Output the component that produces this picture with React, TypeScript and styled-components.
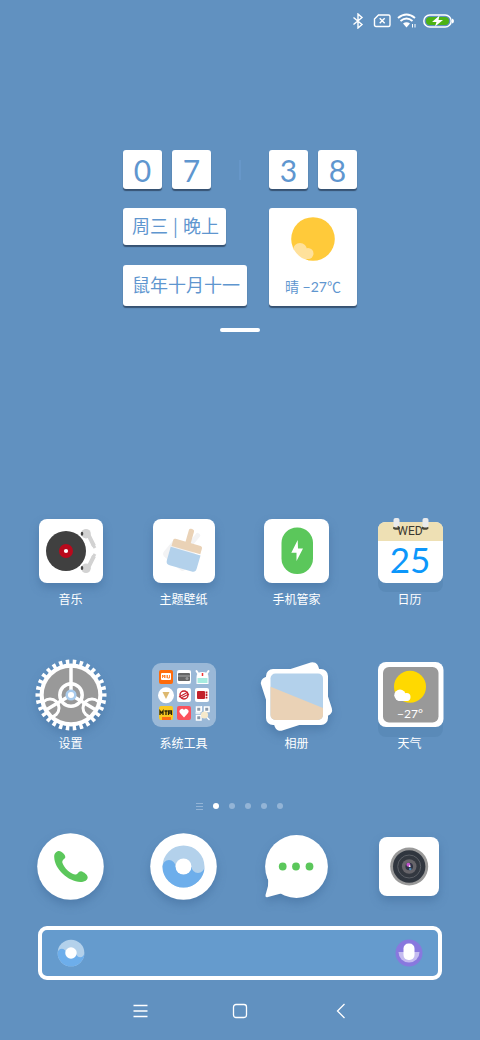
import React from "react";
import styled, { createGlobalStyle } from "styled-components";

const BLUE = "#5f96cf";
const SKY = "#b3d1eb";
const SAND = "#ead2b6";
const GREEN = "#5bc75b";

const GlobalStyle = createGlobalStyle`
  * { box-sizing: border-box; }
  body {
    margin: 0;
    background: #6191c0;
    font-family: Lato, "Noto Sans CJK SC", sans-serif;
    color: #fff;
  }
  button { font: inherit; color: inherit; background: none; border: 0; padding: 0; cursor: pointer; }
`;

const Screen = styled.div`
  min-height: 100vh;
  display: flex;
  flex-direction: column;
`;

const StatusBar = styled.header`
  height: 42px;
  padding: 0 26px 0 0;
  display: flex;
  justify-content: flex-end;
  align-items: center;
  gap: 6px;
`;

const Widget = styled.section`
  width: 234px;
  margin: 108px auto 0;
  display: flex;
  flex-direction: column;
  gap: 19px;
`;

const WidgetRow = styled.div`
  display: flex;
  justify-content: space-between;
  align-items: stretch;
`;

const DigitPair = styled.div`
  display: flex;
  gap: 10px;
`;

const Card = styled.div`
  background: #fff;
  color: ${BLUE};
  border-radius: 3px;
  box-shadow: 0 2px 1px rgba(40, 62, 88, 0.75);
`;

const Digit = styled(Card)`
  width: 39px;
  height: 39px;
  display: grid;
  place-items: center;
  font-size: 30px;
  line-height: 40px;
`;

const Colon = styled.span`
  width: 2px;
  height: 20px;
  align-self: center;
  background: #6797c9;
`;

const DateColumn = styled.div`
  display: flex;
  flex-direction: column;
  align-items: flex-start;
  gap: 20px;
`;

const DateCard = styled(Card)<{ $tall?: boolean }>`
  height: ${(p) => (p.$tall ? 41 : 37)}px;
  padding: 0 7px 0 9px;
  font-size: 18px;
  line-height: ${(p) => (p.$tall ? 38 : 34)}px;
  white-space: nowrap;
  font-family: "Noto Sans CJK SC", sans-serif;
`;

const Bar = styled.span`
  display: inline-block;
  width: 15px;
  text-align: center;
`;

const WeatherCard = styled(Card)`
  width: 88px;
  display: flex;
  flex-direction: column;
  align-items: center;
  padding-top: 7px;
  gap: 14px;
  font-size: 14px;
  line-height: 20px;
  white-space: nowrap;
`;

const Handle = styled.div`
  width: 40px;
  height: 4px;
  margin: 22px auto 0;
  border-radius: 2px;
  background: #fff;
`;

const AppGrid = styled.main`
  margin-top: auto;
  padding: 48px 14px 0;
  display: grid;
  grid-template-columns: repeat(4, 1fr);
  row-gap: 48px;
`;

const AppButton = styled.button`
  display: flex;
  flex-direction: column;
  align-items: center;
`;

const AppLabel = styled.span`
  font-family: "Noto Sans CJK SC", sans-serif;
  font-size: 12px;
  line-height: 16px;
`;

const Tile = styled.svg`
  display: block;
  width: 81px;
  height: 80px;
  overflow: visible;
`;

const Shaded = styled.g`
  filter: drop-shadow(0 5px 5px rgba(40, 80, 125, 0.3));
`;

const Pager = styled.nav`
  margin-top: 51px;
  display: flex;
  justify-content: center;
  align-items: center;
  gap: 8px;
  height: 8px;
`;

const PageDot = styled.button<{ $on?: boolean }>`
  width: 8px;
  height: 8px;
  padding: 0;
  border-radius: 50%;
  border: 1px solid transparent;

  && {
    border: 1px solid transparent;
    background: ${(p) => (p.$on ? "#fff" : "#93b4d6")} padding-box;
  }
`;

const Dock = styled.nav`
  margin-top: 17px;
  padding: 0 14px;
  display: grid;
  grid-template-columns: repeat(4, 1fr);
`;

const Search = styled.form`
  margin: 19px 38px 2px;
  height: 54px;
  padding: 0 15px;
  display: flex;
  align-items: center;
  background: #659bcd;
  border: 4px solid #fff;
  border-radius: 9px;
`;

const SearchInput = styled.input`
  flex: 1;
  min-width: 0;
  height: 40px;
  border: 0;
  outline: 0;
  background: transparent;
  color: #fff;
  font: inherit;
`;

const MicIcon = styled.svg`
  display: block;
`;

const NavBar = styled.nav`
  height: 58px;
  display: flex;
  justify-content: center;
`;

const NavButton = styled.button`
  width: 100px;
  display: grid;
  place-items: center;
`;

const Plate = ({ x = -32, y = -32, w = 64, h = 64 }) => (
  <Shaded>
    <rect x={x} y={y} width={w} height={h} rx="8" fill="#fff" />
  </Shaded>
);

const Swirl = ({ hole = 8 }: { hole?: number }) => (
  <>
    <circle r="21" fill={SKY} />
    <path
      d="M-21 0A6.5 6.5 0 0 1 -8 0L8 0A6.5 6.5 0 0 0 21 0A21 21 0 0 1 -21 0Z"
      fill="#6daeeb"
    />
    <circle r={hole} fill="#fff" />
  </>
);

const Music = () => (
  <>
    <Plate />
    <circle cx="-5" r="20" fill="#404040" />
    <circle cx="-5" r="7" fill="#b9091c" />
    <circle cx="-5" r="2.1" fill="#fff" />
    <g fill="#d2d2d2" stroke="#d2d2d2">
      <circle cx="15" cy="-17.3" r="4.8" stroke="none" />
      <circle cx="15" cy="17.3" r="4.8" stroke="none" />
      <path d="M17.5 -16L23 -5M17.5 16L23 5" strokeWidth="4" fill="none" />
      <path d="M21.5 -7L24 -3M21.500 7L24 3" strokeWidth="3" fill="none" />
    </g>
    <ellipse cx="11" cy="-17.3" rx="1.3" ry="2" fill="#444" />
    <ellipse cx="11" cy="17" rx="1.3" ry="2" fill="#444" />
  </>
);

const Themes = () => (
  <>
    <Plate x={-31} w={62} />
    <g transform="rotate(40 0 0)" fill="#f3f3f4">
      <rect x="-15" y="-5" width="28" height="22" rx="4" />
      <rect x="-2" y="-23" width="5" height="20" rx="2" />
    </g>
    <g transform="translate(3 -4.7) rotate(16)">
      <rect x="-2.700" y="-18" width="5.4" height="17" rx="2" fill={SAND} />
      <path d="M-13 -4H13Q15 -4 15 -2V4H-15V-2Q-15 -4 -13 -4Z" fill={SAND} />
      <path d="M-15.5 5H15.5V19Q15.5 23 11.5 23H-11.5Q-15.5 23 -15.5 19Z" fill={SKY} />
    </g>
  </>
);

const Security = () => (
  <>
    <Plate x={-33} w={65} />
    <rect x="-15.5" y="-23.5" width="31.5" height="46.5" rx="15.5" fill={GREEN} />
    <path d="M.7 -11L-5.700 1.7H-.5V10L6 -2.500H1Z" fill="#fff" />
  </>
);

const CalendarIcon = () => (
  <>
    <rect x="-32" y="-20" width="65" height="61" rx="8" fill="#5484b0" opacity=".5" />
    <rect x="-32" y="-29" width="65" height="61" rx="8" fill="#fff" />
    <path d="M-32 -10V-21Q-32 -29 -24 -29H25Q33 -29 33 -21V-10Z" fill="#eee0b4" />
    <ellipse cx="-13.500" cy="-23" rx="3.5" ry="1.8" fill="#4a4638" />
    <ellipse cx="15" cy="-23" rx="3.5" ry="1.8" fill="#4a4638" />
    <rect x="-16.500" y="-33" width="6" height="9.5" rx="2" fill="#e9eaec" />
    <rect x="12.5" y="-33" width="6" height="9.5" rx="2" fill="#e9eaec" />
    <text y="-16" textAnchor="middle" fontSize="12" fontFamily="Roboto, sans-serif" fill="#3b3931">WED</text>
    <text y="22" textAnchor="middle" fontSize="35" fill="#0c97fb">25</text>
  </>
);

const SettingsIcon = () => (
  <>
    <clipPath id="gear-face"><circle r="28" /></clipPath>
    <Shaded>
      <circle r="33" fill="none" stroke="#fff" strokeWidth="5" pathLength="120" strokeDasharray="2 2" strokeDashoffset="1" />
      <circle r="31.5" fill="#fff" />
    </Shaded>
    <circle r="27.3" fill="#999" />
    <g fill="none" stroke="#fff" strokeWidth="3" clipPath="url(#gear-face)">
      <circle cx="-21" cy="13" r="9" />
      <circle cx="21" cy="13" r="9" />
      <path d="M0 0V-29M0 0L-25 15M0 0L25 15" strokeWidth="3.5" />
    </g>
    <circle r="11.2" fill="none" stroke="#fff" strokeWidth="3.5" />
    <circle r="4.3" fill="#fff" stroke="#a9ccee" strokeWidth="2.5" />
  </>
);

const Mini = ({ x, y, fill = "#fff", children }: { x: number; y: number; fill?: string; children: React.ReactNode }) => (
  <g transform={`translate(${x} ${y})`}>
    <rect x="-7" y="-7" width="14" height="14" rx="2" fill={fill} />
    {children}
  </g>
);

const Tools = () => (
  <>
    <rect x="-32" y="-32" width="64" height="64" rx="9" fill="#fff" opacity=".36" />
    <Mini x={-18} y={-18} fill="#ff6b0a">
      <rect x="-5" y="-4" width="10" height="7" rx="1" fill="#fff" />
      <path d="M-3.500 1V-2L-2.500 -.5L-1.500 -2V1M0 -2V1M1.500 -2V1H3.500V-2" fill="none" stroke="#ff6b0a" strokeWidth=".8" />
    </Mini>
    <Mini x={0} y={-18}>
      <rect x="-6" y="-4" width="12" height="8" rx="1" fill="#666" />
      <path d="M-6 -1H6" stroke="#aaa" />
      <circle cx="3" cy="1.5" r="1.5" fill="#999" />
    </Mini>
    <g transform="translate(18.500 -18)">
      <path d="M-6 -6L-4 -3M6 -6L4 -3" stroke="#fff" strokeWidth="2" strokeLinecap="round" />
      <path d="M-6 7V0Q-6 -5 0 -5T6 0V7Z" fill="#fff" />
      <rect x="-5" y="1" width="10" height="5" fill="#a7ece0" />
      <path d="M0 -4V-1" stroke="#e33" strokeWidth="1.5" />
    </g>
    <circle cx="-18" cy=".3" r="8" fill="#fff" />
    <path d="M-21.500 -3H-14.500L-18 4Z" fill="#ddb86f" />
    <Mini x={0} y={0}>
      <circle r="4" fill="none" stroke="#c9222e" strokeWidth="1.4" />
      <path d="M-5 2L4 -3M-3 3L5 -1" stroke="#c9222e" strokeWidth="1.2" />
    </Mini>
    <Mini x={18} y={0}>
      <rect x="-5" y="-4" width="8" height="8" rx="1" fill="#c2202b" />
      <path d="M4.500 -3.500V3.500" stroke="#c2202b" strokeWidth="1.8" strokeDasharray="2 .6" />
    </Mini>
    <Mini x={-18} y={18} fill="#fbc920">
      <path d="M-6 2V-2L-4.500 0L-3 -2V2M-1.500 -2H1.500M0 -2V2M2.500 2V-2H5.500V2M2.500 0H5.500" fill="none" stroke="#2c2407" strokeWidth="1.3" />
      <rect x="-4" y="4" width="9" height="3" fill="#ff6d16" />
    </Mini>
    <Mini x={0} y={18} fill="#fb525d">
      <path d="M0 4.500L-4 0A2.500 2.500 0 0 1 0 -3A2.500 2.500 0 0 1 4 0Z" fill="#fff" />
    </Mini>
    <g transform="translate(18.500 18)">
      <g fill="#8b9aab" stroke="#fff" strokeWidth="1.5">
        <rect x="-6" y="-6" width="4.5" height="4.5" />
        <rect x="2" y="-6" width="4.5" height="4.5" />
        <rect x="-6" y="2.5" width="4.5" height="4.5" />
      </g>
      <circle cx="2" cy="2" r="3.6" fill="#f6e9cb" />
      <path d="M4.500 4.500L7 7M-1 -7V-2M-7 0H-2" stroke="#fff" strokeWidth="1.3" />
    </g>
  </>
);

const Album = () => (
  <>
    <clipPath id="album-photo"><rect x="-26.5" y="-21.5" width="52.5" height="46.5" rx="5" /></clipPath>
    <Shaded>
      <rect x="-30" y="-28" width="60" height="56" rx="6" fill="#fff" transform="translate(-.5 1.5) rotate(-18)" />
      <rect x="-31" y="-26" width="62" height="56" rx="7" fill="#fff" />
    </Shaded>
    <g clipPath="url(#album-photo)">
      <rect x="-27" y="-22" width="54" height="48" fill={SKY} />
      <path d="M-27 -8.5L27 13.5V26H-27Z" fill={SAND} />
    </g>
  </>
);

const WeatherIcon = () => (
  <>
    <rect x="-32" y="-23" width="65" height="65" rx="8" fill="#5484b0" opacity=".5" />
    <rect x="-32" y="-33" width="65.5" height="65" rx="8" fill="#fff" />
    <rect x="-27" y="-28" width="55.5" height="55.5" rx="6" fill="#999" />
    <circle cx="0" cy="-8.3" r="16" fill="#ffd900" />
    <g fill="#fff">
      <circle cx="-10" cy=".3" r="5.7" />
      <circle cx="-3.5" cy="2" r="4" />
      <rect x="-13" y="1" width="12" height="5" rx="2.5" />
    </g>
    <text x="0" y="23" textAnchor="middle" fontSize="12" fill="#fff">−27°</text>
  </>
);

const Phone = () => (
  <>
    <Shaded><circle cx="-.5" cy="-.5" r="33.3" fill="#fff" /></Shaded>
    <path
      d="M-16.800 -10C-17 -13.500 -14.500 -16 -12 -16C-9 -15.500 -5.700 -12.500 -5.700 -10C-5.700 -8 -8.800 -8 -8.700 -4.500C-7 1 -1 6.500 4 7.500C7.500 7.500 6.800 4.300 10 4.200C13 4.800 16.700 8 16.700 10.500C16.500 13.500 13 15 9.500 15C-3 14.500 -16.500 2 -16.800 -10Z"
      fill={GREEN}
    />
  </>
);

const Browser = () => (
  <>
    <Shaded><circle cx="-.5" cy="-.5" r="33.3" fill="#fff" /></Shaded>
    <g transform="translate(-.5 -.5)"><Swirl /></g>
  </>
);

const Messages = () => (
  <>
    <Shaded>
      <circle cx="-.5" cy="-.5" r="31.4" fill="#fff" />
      <path d="M-30 8Q-28 13 -29 19L-31.500 28Q-32 31 -29 30L-16 26.500Z" fill="#fff" />
    </Shaded>
    {[-14.3, -1, 12.5].map((x) => <circle key={x} cx={x} cy="-.5" r="3.9" fill={GREEN} />)}
  </>
);

const Camera = () => (
  <>
    <Plate x={-31} y={-30} w={60} h={59} />
    <g transform="translate(-.8 -.5)">
      <circle r="19" fill="#999" />
      <circle r="16.2" fill="#30363f" />
      <circle r="11.5" fill="#333840" stroke="#5b5f66" strokeWidth="1" />
      <circle r="7.3" fill="#67656a" />
      <circle r="3.8" fill="#2e3344" />
      <circle cx="-.8" cy="-1.8" r="2" fill="#c455cf" />
      <circle cx="1" cy="2.5" r="1.3" fill="#4d86b4" />
      <circle cx=".5" cy="-.3" r=".9" fill="#fff" />
    </g>
  </>
);

const apps = [
  { label: "音乐", Icon: Music },
  { label: "主题壁纸", Icon: Themes },
  { label: "手机管家", Icon: Security },
  { label: "日历", Icon: CalendarIcon },
  { label: "设置", Icon: SettingsIcon },
  { label: "系统工具", Icon: Tools },
  { label: "相册", Icon: Album },
  { label: "天气", Icon: WeatherIcon },
];

const dock = [
  { label: "电话", Icon: Phone },
  { label: "浏览器", Icon: Browser },
  { label: "短信", Icon: Messages },
  { label: "相机", Icon: Camera },
];

const StatusIcons = () => (
  <>
    <svg width="16" height="16" viewBox="0 0 16 16" fill="none" stroke="#fff" strokeWidth="1.4">
      <path d="M2.500 4.500L11 11.500L7 15V1L11 4.500L2.500 11.500" />
    </svg>
    <svg width="18" height="14" viewBox="0 0 18 14" fill="none" stroke="#fff" strokeWidth="1.4">
      <path d="M5.500 1H15.500Q17 1 17 2.500V11Q17 12.500 15.500 12.500H3Q1.500 12.500 1.500 11V5ZM6.700 4.300L11.700 9.300M11.700 4.300L6.700 9.300" />
    </svg>
    <svg width="20" height="16" viewBox="0 0 20 16" fill="none" stroke="#fff" strokeWidth="1.9">
      <path d="M1 5Q9.500 -2 18 5M3.500 8Q9.500 3.200 15.500 8" />
      <path d="M6 10.500Q9.500 7.800 13 10.500L9.500 14.500Z" fill="#fff" stroke="none" />
      <path d="M15.500 11V14.500M18 11V14.500" strokeWidth="1" />
    </svg>
    <svg width="31" height="14" viewBox="0 0 31 14">
      <rect x=".8" y="1" width="27.400" height="12" rx="6" fill="none" stroke="#fff" strokeWidth="1.5" />
      <path d="M29 4.500Q31 5 31 7T29 9.500Z" fill="#fff" />
      <rect x="3" y="3" width="23" height="8" rx="4" fill="#4db214" />
      <path d="M16.500 1.500L9 8H13.500L12 12.500L20 6H15.500Z" fill="#fff" />
    </svg>
  </>
);

export default function App() {
  return (
    <Screen>
      <GlobalStyle />
      <StatusBar><StatusIcons /></StatusBar>

      <Widget>
        <WidgetRow>
          <DigitPair><Digit>0</Digit><Digit>7</Digit></DigitPair>
          <Colon />
          <DigitPair><Digit>3</Digit><Digit>8</Digit></DigitPair>
        </WidgetRow>
        <WidgetRow>
          <DateColumn>
            <DateCard>周三<Bar>|</Bar>晚上</DateCard>
            <DateCard $tall>鼠年十月十一</DateCard>
          </DateColumn>
          <WeatherCard>
            <svg width="48" height="48" viewBox="-24 -24 48 48">
              <circle r="21.8" fill="#ffca3a" />
              <g fill="#ffe19b">
                <circle cx="-13" cy="11" r="7" />
                <circle cx="-5" cy="14.5" r="5.5" />
                <rect x="-17" y="12" width="15" height="8" rx="4" />
              </g>
              <path d="M-18.700 11.200A21.800 21.800 0 0 0 -5 21.300L-5 24H-24V10H-20Z" fill="#fff" />
            </svg>
            <span>晴 −27℃</span>
          </WeatherCard>
        </WidgetRow>
      </Widget>
      <Handle />

      <AppGrid>
        {apps.map(({ label, Icon }) => (
          <AppButton key={label} type="button">
            <Tile viewBox="-41 -40 81 80" aria-hidden="true"><Icon /></Tile>
            <AppLabel>{label}</AppLabel>
          </AppButton>
        ))}
      </AppGrid>

      <Pager aria-label="页面">
        <svg width="8" height="8" viewBox="0 0 8 8" stroke="#93b4d6" strokeWidth="1">
          <path d="M0 1.500H7M0 4.500H7M0 7.500H7" />
        </svg>
        {[1, 2, 3, 4, 5].map((n) => (
          <PageDot key={n} type="button" $on={n === 1} aria-label={`第${n}页`} />
        ))}
      </Pager>

      <Dock aria-label="常用应用">
        {dock.map(({ label, Icon }) => (
          <AppButton key={label} type="button" aria-label={label}>
            <Tile viewBox="-41 -40 81 80" aria-hidden="true"><Icon /></Tile>
          </AppButton>
        ))}
      </Dock>

      <Search role="search" onSubmit={(e) => e.preventDefault()}>
        <svg width="28" height="28" viewBox="-22 -22 44 44" aria-hidden="true"><Swirl hole={9} /></svg>
        <SearchInput type="text" aria-label="搜索" />
        <button type="button" aria-label="语音搜索">
          <MicIcon width="28" height="28" viewBox="-14 -14 28 28">
            <circle r="13.5" fill="#8878de" />
            <path d="M-10.500 -1H10.500A10.500 10.500 0 0 1 -10.500 -1Z" fill="#c5bcf0" />
            <rect x="-5.500" y="-9.500" width="11" height="16.5" rx="5" fill="#fff" />
          </MicIcon>
        </button>
      </Search>

      <NavBar aria-label="系统导航">
        <NavButton type="button" aria-label="菜单">
          <svg width="16" height="16" viewBox="0 0 16 16" stroke="#fff" strokeWidth="1.3">
            <path d="M1.500 2.500H15.500M1.500 8H15.500M1.500 13.500H15.500" />
          </svg>
        </NavButton>
        <NavButton type="button" aria-label="主屏幕">
          <svg width="16" height="16" viewBox="0 0 16 16" fill="none" stroke="#fff" strokeWidth="1.3">
            <rect x="1.5" y="1.5" width="13" height="13" rx="2.5" />
          </svg>
        </NavButton>
        <NavButton type="button" aria-label="返回">
          <svg width="16" height="16" viewBox="0 0 16 16" fill="none" stroke="#fff" strokeWidth="1.3">
            <path d="M12.500 1L5.500 8L12.500 15" />
          </svg>
        </NavButton>
      </NavBar>
    </Screen>
  );
}
